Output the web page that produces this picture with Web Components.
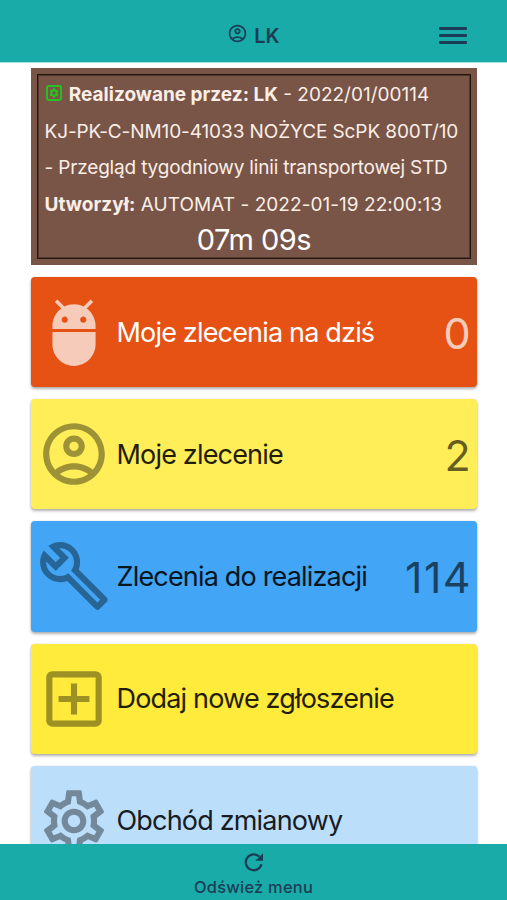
<!DOCTYPE html>
<html lang="pl">
<head>
<meta charset="utf-8">
<meta name="viewport" content="width=device-width, initial-scale=1">
<title>Zlecenia</title>
<style>
    body {
        margin: 0;
        background: #fff;
        font-family: Inter, Roboto, "Liberation Sans", sans-serif;
    }
</style>
</head>
<body>
<app-shell>
    <app-header slot="header">LK</app-header>
    <active-order timer="07m 09s">
        <order-line><status-icon></status-icon> <b>Realizowane przez: LK</b> - 2022/01/00114</order-line>
        <order-line style="--ls: -0.1px">KJ-PK-C-NM10-41033 NOŻYCE ScPK 800T/10</order-line>
        <order-line style="--ls: -0.17px">- Przegląd tygodniowy linii transportowej STD</order-line>
        <order-line style="--ls: 0.05px"><b>Utworzył:</b> AUTOMAT - 2022-01-19 22:00:13</order-line>
    </active-order>
    <menu-tile icon="adb" count="0" style="--bg: #e65114; --fg: #fff">Moje zlecenia na dziś</menu-tile>
    <menu-tile icon="account" count="2" style="--bg: #ffee58">Moje zlecenie</menu-tile>
    <menu-tile icon="build" count="114" style="--bg: #42a5f5">Zlecenia do realizacji</menu-tile>
    <menu-tile icon="add" style="--bg: #ffeb3b">Dodaj nowe zgłoszenie</menu-tile>
    <menu-tile icon="settings" style="--bg: #bbdefb">Obchód zmianowy</menu-tile>
    <app-footer slot="footer">Odśwież menu</app-footer>
</app-shell>

<script>
const ICONS = {
    adb: "M5 16c0 3.87 3.13 7 7 7s7-3.13 7-7v-4H5v4zM16.12 4.37l2.1-2.1-.82-.83-2.3 2.31C14.16 3.28 13.12 3 12 3s-2.16.28-3.09.75L6.6 1.44l-.82.83 2.1 2.1C6.14 5.64 5 7.68 5 10v1h14v-1c0-2.32-1.14-4.36-2.88-5.63zM9 9c-.55 0-1-.45-1-1s.45-1 1-1 1 .45 1 1-.45 1-1 1zm6 0c-.55 0-1-.45-1-1s.45-1 1-1 1 .45 1 1-.45 1-1 1z",
    account: "M12 2C6.48 2 2 6.48 2 12s4.48 10 10 10 10-4.48 10-10S17.52 2 12 2zM7.35 18.5C8.66 17.56 10.26 17 12 17s3.34.56 4.65 1.5C15.34 19.44 13.74 20 12 20s-3.34-.56-4.65-1.5zm10.79-1.38C16.45 15.8 14.32 15 12 15s-4.45.8-6.14 2.12C4.7 15.73 4 13.95 4 12c0-4.42 3.58-8 8-8s8 3.58 8 8c0 1.95-.7 3.73-1.86 5.12zM12 6c-1.93 0-3.5 1.57-3.5 3.5S10.07 13 12 13s3.5-1.57 3.5-3.5S13.93 6 12 6zm0 5c-.83 0-1.5-.67-1.5-1.5S11.17 8 12 8s1.5.67 1.5 1.5S12.83 11 12 11z",
    build: "M22.61 18.99l-9.08-9.08c.93-2.34.45-5.1-1.44-7C9.79.61 6.21.4 3.66 2.26L7.5 6.11 6.08 7.52 2.25 3.69C.39 6.23.6 9.82 2.9 12.11c1.86 1.86 4.57 2.35 6.89 1.48l9.11 9.11c.39.39 1.02.39 1.41 0l2.3-2.3c.4-.38.4-1.01 0-1.41zm-3 1.6l-9.46-9.46c-.61.45-1.29.72-2 .82-1.36.2-2.79-.21-3.83-1.25C3.37 9.76 2.93 8.5 3 7.26l3.09 3.09 4.24-4.24-3.09-3.09c1.24-.07 2.49.37 3.44 1.31 1.08 1.08 1.49 2.57 1.24 3.96-.12.71-.42 1.37-.88 1.96l9.45 9.45-.88.89z",
    add: "M19 3H5c-1.11 0-2 .9-2 2v14c0 1.1.89 2 2 2h14c1.1 0 2-.9 2-2V5c0-1.1-.9-2-2-2zm0 16H5V5h14v14zm-8-2h2v-4h4v-2h-4V7h-2v4H7v2h4z",
    settings: "M19.43 12.98c.04-.32.07-.64.07-.98 0-.34-.03-.66-.07-.98l2.11-1.65c.19-.15.24-.42.12-.64l-2-3.46c-.09-.16-.26-.25-.44-.25-.06 0-.12.01-.17.03l-2.49 1c-.52-.4-1.08-.73-1.69-.98l-.38-2.65C14.46 2.18 14.25 2 14 2h-4c-.25 0-.46.18-.49.42l-.38 2.65c-.61.25-1.17.59-1.69.98l-2.49-1c-.06-.02-.12-.03-.18-.03-.17 0-.34.09-.43.25l-2 3.46c-.13.22-.07.49.12.64l2.11 1.65c-.04.32-.07.65-.07.98 0 .33.03.66.07.98l-2.11 1.65c-.19.15-.24.42-.12.64l2 3.46c.09.16.26.25.44.25.06 0 .12-.01.17-.03l2.49-1c.52.4 1.08.73 1.69.98l.38 2.65c.03.24.24.42.49.42h4c.25 0 .46-.18.49-.42l.38-2.65c.61-.25 1.17-.59 1.69-.98l2.49 1c.06.02.12.03.18.03.17 0 .34-.09.43-.25l2-3.46c.12-.22.07-.49-.12-.64l-2.11-1.65zm-1.98-1.71c.04.31.05.52.05.73 0 .21-.02.43-.05.73l-.14 1.13.89.7 1.08.84-.7 1.21-1.27-.51-1.04-.42-.9.68c-.43.32-.84.56-1.25.73l-1.06.43-.16 1.13-.2 1.35h-1.4l-.19-1.35-.16-1.13-1.06-.43c-.43-.18-.83-.41-1.23-.71l-.91-.7-1.06.43-1.27.51-.7-1.21 1.08-.84.89-.7-.14-1.13c-.03-.31-.05-.54-.05-.74s.02-.43.05-.73l.14-1.13-.89-.7-1.08-.84.7-1.21 1.27.51 1.04.42.9-.68c.43-.32.84-.56 1.25-.73l1.06-.43.16-1.13.2-1.35h1.39l.19 1.35.16 1.13 1.06.43c.43.18.83.41 1.23.71l.91.7 1.06-.43 1.27-.51.7 1.21-1.07.85-.89.7.14 1.13zM12 8c-2.21 0-4 1.79-4 4s1.79 4 4 4 4-1.79 4-4-1.79-4-4-4zm0 6c-1.1 0-2-.9-2-2s.9-2 2-2 2 .9 2 2-.9 2-2 2z"
};

class AppShell extends HTMLElement {
    constructor() {
        super();
        this.attachShadow({ mode: "open" }).innerHTML = `
            <style>
                :host {
                    display: grid;
                    grid-template-rows: 62px 1fr 56px;
                    height: 900px;
                    overflow: hidden;
                }
                main {
                    display: flex;
                    flex-direction: column;
                    gap: 12px;
                    min-height: 0;
                    overflow: hidden;
                    padding: 6px 30.5px 0;
                }
            </style>
            <slot name="header"></slot>
            <main><slot></slot></main>
            <slot name="footer"></slot>
        `;
    }
}

class AppHeader extends HTMLElement {
    constructor() {
        super();
        this.attachShadow({ mode: "open" }).innerHTML = `
            <style>
                :host {
                    display: grid;
                    grid-template-columns: 1fr auto 1fr;
                    align-items: center;
                    padding: 9px 40px 0 40px;
                    background: #18aba7;
                    color: #1c3c57;
                    box-shadow: 0 1px 0 #a6e2df;
                    z-index: 1;
                }
                .user {
                    grid-column: 2;
                    display: flex;
                    align-items: center;
                    gap: 6px;
                    font-size: 20px;
                    font-weight: 600;
                    line-height: 24px;
                }
                .user svg { margin-top: -4px; }
                .menu {
                    justify-self: end;
                    display: grid;
                    gap: 4.6px;
                    width: 28px;
                }
                .menu i {
                    height: 2.6px;
                    border-radius: 1px;
                    background: currentColor;
                }
            </style>
            <div class="user">
                <svg width="21" height="21" viewBox="0 0 24 24" fill="currentColor"><path d="${ICONS.account}"/></svg>
                <span><slot></slot></span>
            </div>
            <div class="menu"><i></i><i></i><i></i></div>
        `;
    }
}

class StatusIcon extends HTMLElement {
    constructor() {
        super();
        this.attachShadow({ mode: "open" }).innerHTML = `
            <style>
                :host { display: inline-block; width: 19px; }
                svg { display: block; }
            </style>
            <svg width="19" height="16" viewBox="0 0 19 16" fill="none" stroke="#29c121">
                <rect x="2" y="1" width="14" height="14" rx="1.5" stroke-width="1.9"/>
                <circle cx="9" cy="8" r="2.7" stroke-width="2"/>
                <path d="M9 3.2v2M9 10.8v2M5 5.7l1.7 1M11.3 9.3l1.7 1M5 10.3l1.7-1M11.3 6.7l1.7-1" stroke-width="2"/>
            </svg>
        `;
    }
}

class OrderLine extends HTMLElement {
    constructor() {
        super();
        this.attachShadow({ mode: "open" }).innerHTML = `
            <style>
                :host {
                    display: block;
                    white-space: nowrap;
                    letter-spacing: var(--ls, 0);
                }
            </style>
            <slot></slot>
        `;
    }
}

class ActiveOrder extends HTMLElement {
    connectedCallback() {
        this.attachShadow({ mode: "open" }).innerHTML = `
            <style>
                :host {
                    display: block;
                    flex: none;
                    box-sizing: border-box;
                    height: 197px;
                    padding: 6px;
                    background: #795548;
                    color: #fbeee6;
                    font-size: 19px;
                    line-height: 36.6px;
                }
                .frame {
                    box-sizing: border-box;
                    height: 100%;
                    padding: 2px 6px 0 7px;
                    border: 1px solid #24150f;
                    box-shadow: inset 0 0 0 1px rgba(36, 21, 15, 0.45);
                }
                ::slotted(order-line) { height: 36.6px; }
                .timer {
                    color: #fff;
                    font-size: 29px;
                    line-height: 34px;
                    letter-spacing: -0.5px;
                    text-align: center;
                }
            </style>
            <div class="frame">
                <slot></slot>
                <div class="timer">${this.getAttribute("timer")}</div>
            </div>
        `;
    }
}

class MenuTile extends HTMLElement {
    connectedCallback() {
        this.attachShadow({ mode: "open" }).innerHTML = `
            <style>
                :host {
                    display: grid;
                    grid-template-columns: 74px 1fr auto;
                    column-gap: 6px;
                    align-items: center;
                    flex: none;
                    box-sizing: border-box;
                    height: 110.2px;
                    padding: 0 4.5px 0 6px;
                    border-radius: 4px;
                    background: var(--bg);
                    color: var(--fg, #000);
                    box-shadow: 0 2px 3px rgba(0, 0, 0, 0.3), 0 0 2px rgba(0, 0, 0, 0.12);
                }
                svg { opacity: 0.38; }
                :host([icon="adb"]) svg { opacity: 0.7; }
                .label {
                    padding-top: 1px;
                    font-size: 27px;
                    line-height: 36px;
                    letter-spacing: -0.82px;
                    opacity: 0.87;
                    white-space: nowrap;
                }
                :host([icon="adb"]) .label { opacity: 1; }
                .count {
                    padding-top: 2px;
                    font-size: 43px;
                    font-weight: 400;
                    line-height: 50px;
                    letter-spacing: 1.4px;
                    opacity: 0.6;
                }
                :host([icon="adb"]) .count { opacity: 0.7; }
            </style>
            <svg width="74" height="74" viewBox="0 0 24 24" fill="currentColor"><path d="${ICONS[this.getAttribute("icon")]}"/></svg>
            <span class="label"><slot></slot></span>
            <span class="count">${this.getAttribute("count") || ""}</span>
        `;
    }
}

class AppFooter extends HTMLElement {
    constructor() {
        super();
        this.attachShadow({ mode: "open" }).innerHTML = `
            <style>
                :host {
                    display: flex;
                    flex-direction: column;
                    align-items: center;
                    gap: 4px;
                    padding-top: 8px;
                    background: #18aba7;
                    color: #1c3c57;
                    font-size: 16.4px;
                    font-weight: 500;
                    line-height: 22px;
                    letter-spacing: 0.25px;
                }
            </style>
            <svg width="20" height="20" viewBox="0 0 20 20">
                <path d="M17.4 12.2A7.9 7.9 0 1 1 15.2 4.6" fill="none" stroke="currentColor" stroke-width="2.3"/>
                <path d="M19 1.2v7.6h-7.6z" fill="currentColor"/>
            </svg>
            <span><slot></slot></span>
        `;
    }
}

customElements.define("app-shell", AppShell);
customElements.define("app-header", AppHeader);
customElements.define("status-icon", StatusIcon);
customElements.define("order-line", OrderLine);
customElements.define("active-order", ActiveOrder);
customElements.define("menu-tile", MenuTile);
customElements.define("app-footer", AppFooter);
</script>
</body>
</html>
